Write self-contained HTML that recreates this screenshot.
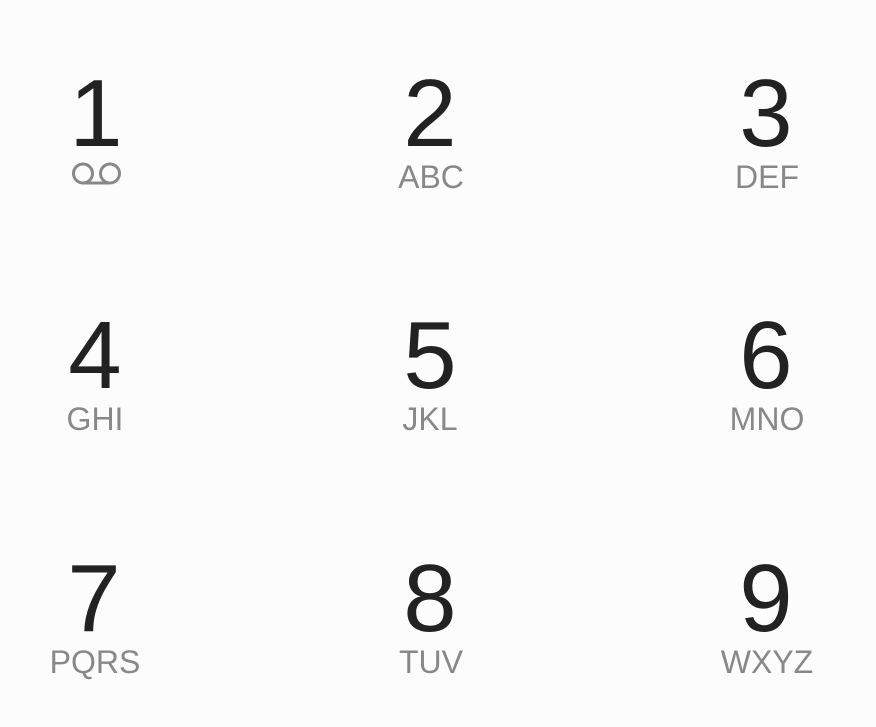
<!DOCTYPE html>
<html><head><style>
html,body{margin:0;padding:0;background:#fcfcfc;width:876px;height:727px;overflow:hidden}
svg{display:block}
.d{font-family:"Liberation Sans",sans-serif;font-size:96px;fill:#222}
.l{font-family:"Liberation Sans",sans-serif;font-size:32px;fill:#888}
</style></head><body>
<svg width="876" height="727" viewBox="0 0 876 727">
<g text-anchor="middle">
<text class="d" x="96" y="146">1</text>
<text class="d" x="430" y="146">2</text>
<text class="d" x="766" y="146">3</text>
<text class="l" x="431" y="188">ABC</text>
<text class="l" x="767" y="188">DEF</text>
<text class="d" x="95" y="388">4</text>
<text class="d" x="430" y="388">5</text>
<text class="d" x="766" y="388">6</text>
<text class="l" x="95" y="430">GHI</text>
<text class="l" x="430" y="430">JKL</text>
<text class="l" x="767" y="430">MNO</text>
<text class="d" x="94" y="631">7</text>
<text class="d" x="430" y="631">8</text>
<text class="d" x="766" y="631">9</text>
<text class="l" x="95" y="673">PQRS</text>
<text class="l" x="431" y="673">TUV</text>
<text class="l" x="767" y="673">WXYZ</text>
</g>
<g fill="none" stroke="#888" stroke-width="3">
<circle cx="83" cy="173.5" r="9.5"/>
<circle cx="110" cy="173.5" r="9.5"/>
<line x1="83" y1="183" x2="110" y2="183"/>
</g>
</svg>
</body></html>
